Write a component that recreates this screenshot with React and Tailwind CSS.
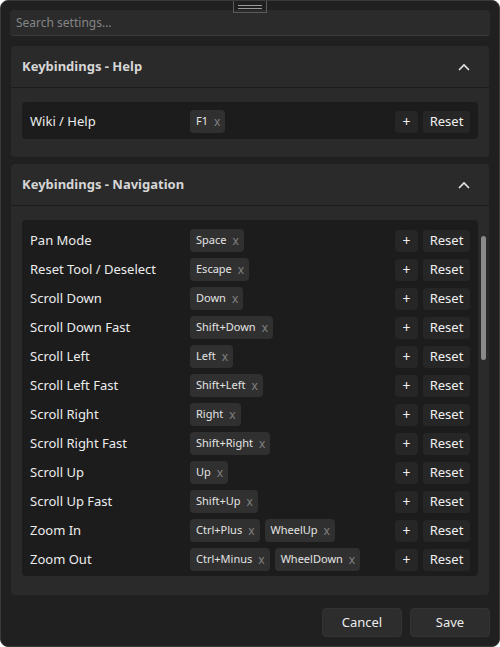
import React from "react";

const helpRows = [{ label: "Wiki / Help", keys: ["F1"] }];

const navRows = [
  { label: "Pan Mode", keys: ["Space"] },
  { label: "Reset Tool / Deselect", keys: ["Escape"] },
  { label: "Scroll Down", keys: ["Down"] },
  { label: "Scroll Down Fast", keys: ["Shift+Down"] },
  { label: "Scroll Left", keys: ["Left"] },
  { label: "Scroll Left Fast", keys: ["Shift+Left"] },
  { label: "Scroll Right", keys: ["Right"] },
  { label: "Scroll Right Fast", keys: ["Shift+Right"] },
  { label: "Scroll Up", keys: ["Up"] },
  { label: "Scroll Up Fast", keys: ["Shift+Up"] },
  { label: "Zoom In", keys: ["Ctrl+Plus", "WheelUp"] },
  { label: "Zoom Out", keys: ["Ctrl+Minus", "WheelDown"] },
];

const Chevron = () => (
  <svg width="12" height="8" viewBox="0 0 12 8" fill="none">
    <path d="M1 7 L6 2 L11 7" stroke="#e6e6e6" strokeWidth="1.6" />
  </svg>
);

const KeyChip = ({ name }) => (
  <div className="flex items-center h-[23px] rounded-[4px] bg-[#303030] pl-[6px] pr-[5px] text-[11px] text-[#e4e4e4]">
    <span>{name}</span>
    <span className="ml-[6px] text-[12px] text-[#808080]">x</span>
  </div>
);

const BindingRow = ({ row }) => (
  <div className="flex items-center h-[23px]">
    <div className="w-[160px] text-[13px] text-[#ececec]">{row.label}</div>
    <div className="flex flex-1 gap-[5px]">
      {row.keys.map((k) => (
        <KeyChip key={k} name={k} />
      ))}
    </div>
    <button className="flex items-center justify-center w-[23px] h-[22px] rounded-[4px] bg-[#262626] text-[14px] text-[#f0f0f0]">
      +
    </button>
    <button className="ml-[5px] w-[47px] h-[22px] rounded-[4px] bg-[#262626] text-[13px] text-[#f0f0f0]">
      Reset
    </button>
  </div>
);

const Section = ({ title, children }) => (
  <div className="rounded-[4px] bg-[#2a2a2a]">
    <div className="flex items-center justify-between h-[42px] px-[11px] border-b border-[#1c1c1c]">
      <span className="text-[13px] font-bold text-[#d6d6d6]">{title}</span>
      <span className="mr-[8px]">
        <Chevron />
      </span>
    </div>
    {children}
  </div>
);

export default function App() {
  return (
    <div
      className="relative flex flex-col h-[647px] w-[500px] rounded-[8px] border border-[#3a3a3a] bg-[#202020] px-[9px] pt-[9px] pb-[9px]"
      style={{ fontFamily: '"Noto Sans", "Open Sans", sans-serif' }}
    >
      <div className="absolute left-[232px] top-0 flex flex-col items-center justify-center gap-[2px] w-[34px] h-[12px] border border-[#5a5a5a] border-t-0">
        <div className="w-[24px] h-px bg-[#9a9a9a]" />
        <div className="w-[24px] h-px bg-[#9a9a9a]" />
      </div>

      <div className="flex items-center h-[26px] rounded-[4px] bg-[#2b2b2b] border-b border-[#3c3c3c] px-[6px] text-[12px] text-[#858585]">
        Search settings...
      </div>

      <div className="mt-[10px] px-[1px]">
        <Section title="Keybindings - Help">
          <div className="px-[11px] pt-[14px] pb-[18px]">
            <div className="rounded-[4px] bg-[#1c1c1c] px-[8px] pt-[8px] pb-[6px]">
              {helpRows.map((r) => (
                <BindingRow key={r.label} row={r} />
              ))}
            </div>
          </div>
        </Section>
      </div>

      <div className="mt-[7px] px-[1px]">
        <Section title="Keybindings - Navigation">
          <div className="flex pl-[11px] pt-[14px] pb-[19px]">
            <div className="flex-1 h-[356px] overflow-hidden rounded-[4px] bg-[#1c1c1c] px-[8px] pt-[9px] flex flex-col gap-[6px]">
              {navRows.map((r) => (
                <BindingRow key={r.label} row={r} />
              ))}
            </div>
            <div className="w-[11px] flex justify-center pt-[16px]">
              <div className="w-[5px] h-[124px] rounded-full bg-[#8a8a8a]" />
            </div>
          </div>
        </Section>
      </div>

      <div className="mt-auto flex justify-end gap-[8px]">
        <button className="w-[80px] h-[29px] rounded-[4px] bg-[#2d2d2d] border border-[#333] text-[13px] text-[#ececec]">
          Cancel
        </button>
        <button className="w-[80px] h-[29px] rounded-[4px] bg-[#2d2d2d] border border-[#333] text-[13px] text-[#ececec]">
          Save
        </button>
      </div>
    </div>
  );
}
